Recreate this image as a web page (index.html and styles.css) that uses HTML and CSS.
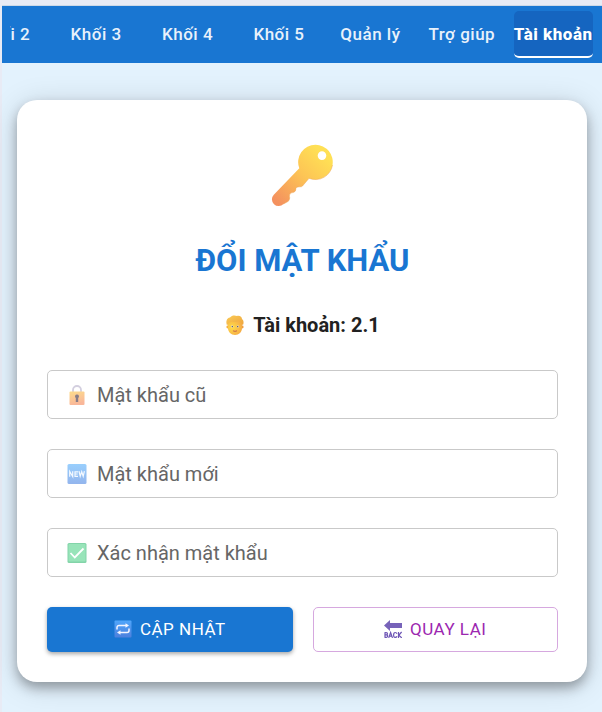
FILE: index.html
```html
<!DOCTYPE html>
<html lang="vi">
<head>
<meta charset="utf-8">
<meta name="viewport" content="width=device-width, initial-scale=1">
<title>Đổi mật khẩu</title>
<link rel="stylesheet" href="styles.css">
</head>
<body>
<div class="app">
  <nav class="navbar">
    <div class="nav-scroller">
      <div class="nav-list">
        <a class="nav-item" href="#">Khối 2</a>
        <a class="nav-item" href="#">Khối 3</a>
        <a class="nav-item" href="#">Khối 4</a>
        <a class="nav-item" href="#">Khối 5</a>
        <a class="nav-item" href="#">Quản lý</a>
        <a class="nav-item" href="#">Trợ giúp</a>
        <a class="nav-item active" href="#" aria-current="page">Tài khoản</a>
      </div>
    </div>
  </nav>
  <main class="page">
    <form class="card">
      <svg class="key" viewBox="0 0 64 64" aria-hidden="true">
        <defs>
          <linearGradient id="keyFill" x1="0.85" y1="0.15" x2="0.1" y2="0.95">
            <stop offset="0" stop-color="#ffe055"/>
            <stop offset="0.45" stop-color="#fdc455"/>
            <stop offset="1" stop-color="#f4915f"/>
          </linearGradient>
        </defs>
        <path fill="url(#keyFill)" fill-rule="evenodd" d="M44.500 1.700a17.400 17.400 0 1 1-6.500 33.600L31.500 43q-.8 1-2.500.8-3.500-.3-4 1.500-.2 3.500-2.200 4-3.800.2-4.300 2.700-.2 1.500.2 2.700.2 1.500-1.400 3.600L12.500 61A6.700 6.700 0 0 1 2.800 51.700L28.300 25.300A17.400 17.400 0 0 1 44.500 1.700zm6.500 6.600a4.300 4.300 0 1 0 0 8.600a4.300 4.300 0 0 0 0-8.600z"/>
        <path fill="none" stroke="#eda24d" stroke-width=".8" opacity=".6" d="M61.500 22A17.200 17.200 0 0 1 38 35.300L31.500 43q-.8 1-2.500.8-3.500-.3-4 1.500-.2 3.500-2.200 4-3.800.2-4.300 2.700-.2 1.500.2 2.700.2 1.500-1.400 3.600L12.500 61"/>
      </svg>
      <h1 class="title">ĐỔI MẬT KHẨU</h1>
      <p class="account">
        <svg class="icon" viewBox="0 0 20 20" aria-hidden="true">
          <defs>
            <radialGradient id="faceFill" cx=".3" cy=".45" r=".75">
              <stop offset="0" stop-color="#ffdc49"/>
              <stop offset="1" stop-color="#f5a945"/>
            </radialGradient>
            <linearGradient id="hairFill" x1="0" y1="0" x2="1" y2="1">
              <stop offset="0" stop-color="#fbcb55"/>
              <stop offset="1" stop-color="#eda43d"/>
            </linearGradient>
          </defs>
          <circle cx="2.800" cy="12" r="1.400" fill="#f5b03f"/>
          <circle cx="17.200" cy="12" r="1.400" fill="#ee9c42"/>
          <path fill="url(#faceFill)" d="M3 6h14v7c0 4-3 7-7 7s-7-3-7-7z"/>
          <path fill="url(#hairFill)" d="M2.200 10.500C.5 7 1.500 3 5 2.500 6.500.2 10 0 12 1c3-.6 5 1 5 3 2 1.500 2 4.500.8 6.500L16.500 8C15.500 7 15 6.500 14 6 10 7.500 7 6.500 5 7c-1.500.7-2 2-2.800 3.500z"/>
          <circle cx="7.200" cy="11.500" r="1.100" fill="#fff"/><circle cx="12.800" cy="11.500" r="1.100" fill="#fff"/>
          <circle cx="7.300" cy="11.600" r=".8" fill="#655d6e"/><circle cx="12.700" cy="11.600" r=".8" fill="#655d6e"/>
          <path fill="none" stroke="#c25a4a" stroke-width=".9" stroke-linecap="round" d="M8.300 16q1.700.9 3.400 0"/>
        </svg>
        <span>Tài khoản: 2.1</span>
      </p>

      <div class="field">
        <input id="old" type="password" autocomplete="off">
        <label for="old">
          <svg class="icon" viewBox="0 0 20 20" aria-hidden="true">
            <defs><linearGradient id="lockFill" x1="0" y1="0" x2=".3" y2="1"><stop offset="0" stop-color="#fddc8b"/><stop offset="1" stop-color="#f9b79a"/></linearGradient></defs>
            <path fill="none" stroke="#d3cfdf" stroke-width="1.800" d="M6 8V5a4 4 0 0 1 8 0V8"/>
            <rect x="2.500" y="6.500" width="15" height="13.500" rx="1" fill="url(#lockFill)"/>
            <path fill="#887d87" d="M10 9.500a2 2 0 0 1 1.200 3.600V17H8.800v-3.900A2 2 0 0 1 10 9.500z"/>
          </svg>
          <span>Mật khẩu cũ</span>
        </label>
      </div>

      <div class="field">
        <input id="new" type="password" autocomplete="off">
        <label for="new">
          <svg class="icon" viewBox="0 0 20 20" aria-hidden="true">
            <defs><linearGradient id="newFill" x1="0" y1="0" x2="0" y2="1"><stop offset="0" stop-color="#99cffd"/><stop offset="1" stop-color="#93b5ed"/></linearGradient></defs>
            <rect x=".5" width="19" height="20" rx="1.500" fill="url(#newFill)"/>
            <path fill="none" stroke="#f4f9ff" stroke-width="1.200" d="M2.700 12.800V7.500l3 5V7.200M11 7.800H8v4.500h3M8 10h2.700M12 7.200l1.200 5 1.500-4.500 1.500 4.500 1.200-5"/>
          </svg>
          <span>Mật khẩu mới</span>
        </label>
      </div>

      <div class="field">
        <input id="confirm" type="password" autocomplete="off">
        <label for="confirm">
          <svg class="icon" viewBox="0 0 20 20" aria-hidden="true">
            <rect x=".5" width="19" height="20" rx="1.500" fill="#83d4a9"/>
            <rect x="1.500" y="1" width="17" height="17.500" rx="1" fill="#98e4b9"/>
            <path fill="none" stroke="#fff" stroke-width="1.800" d="M3.500 10l4.300 4.500L16.500 5.500"/>
          </svg>
          <span>Xác nhận mật khẩu</span>
        </label>
      </div>

      <div class="actions">
        <button class="btn primary" type="submit">
          <svg class="icon-small" viewBox="0 0 18 18" aria-hidden="true">
            <defs><linearGradient id="loopFill" x1="0" y1="0" x2="0" y2="1"><stop offset="0" stop-color="#50a6fb"/><stop offset="1" stop-color="#4d80dd"/></linearGradient></defs>
            <rect x=".5" y=".5" width="17" height="17" rx="1" fill="url(#loopFill)"/>
            <path fill="none" stroke="#f4f5ff" stroke-width="1.500" d="M3 9.500V7.500a2 2 0 0 1 2-2h7M15 8.500v2a2 2 0 0 1-2 2H6"/>
            <path fill="#f4f5ff" d="M11.500 3.300l3.500 2.200-3.500 2.200zM6.500 10.300L3 12.500l3.500 2.200z"/>
          </svg>
          <span>CẬP NHẬT</span>
        </button>
        <button class="btn secondary" type="button">
          <svg class="icon-small" viewBox="0 0 18 18" aria-hidden="true">
            <path fill="#7763b9" d="M0 5.500L6 0v3h12v5H6v3z"/>
            <path fill="none" stroke="#6d55b5" stroke-width="1.200" d="M1 12.600v4.800M.6 12.600h1.600q1.300 0 1.300 1.100T2.200 14.900H1h1.400q1.300 0 1.300 1.200t-1.300 1.200H.6M4.700 17.900L6.600 12.500l1.900 5.400M5.300 16.200h2.600M13 13.700q-.5-1.200-1.700-1.200-1.700 0-1.700 2.500t1.700 2.400q1.200 0 1.700-1.200M14.500 12v5.900M17.600 12l-2.800 3.300 3 2.600"/>
          </svg>
          <span>QUAY LẠI</span>
        </button>
      </div>
    </form>
  </main>
</div>
</body>
</html>
```
FILE: styles.css
```css
* {
  box-sizing: border-box;
}

body {
  margin: 0;
  padding: 6px 0 0 2px;
  background: #e8ebf5;
  color: #212121;
  font-family: Roboto, "Noto Sans", sans-serif;
}

.app {
  display: flex;
  flex-direction: column;
  min-height: calc(100vh - 6px);
  background: #e3f2fd;
}

.navbar {
  height: 57px;
  padding: 5px 9px 0 8px;
  background: #1976d2;
  box-shadow: 0 -1px 0 #cdd9e7;
}

.nav-scroller {
  overflow: hidden;
}

.nav-list {
  display: flex;
  gap: 12px;
  margin-left: -45px;
}

.nav-item {
  flex: 1 1 0;
  min-width: 0;
  display: flex;
  align-items: center;
  justify-content: center;
  height: 47px;
  border-bottom: 2px solid transparent;
  border-radius: 5px;
  color: #e8f1fb;
  font-size: 17px;
  font-weight: 500;
  letter-spacing: 0.03em;
  text-decoration: none;
  white-space: nowrap;
}

.nav-item.active {
  border-bottom-color: #fff;
  background: #1565c0;
  color: #fff;
  font-weight: 800;
}

.page {
  flex: 1;
  padding: 37px 15px 30px;
}

.card {
  display: flex;
  flex-direction: column;
  gap: 30px;
  padding: 42px 29px 30px 30px;
  border-radius: 20px;
  background: #fff;
  box-shadow: 0 6px 12px rgba(0, 0, 0, 0.3), 0 4px 30px rgba(0, 0, 0, 0.15);
}

.key {
  align-self: center;
  width: 64px;
  height: 66px;
}

.title {
  margin: 0;
  color: #1976d2;
  font-size: 31px;
  font-weight: 700;
  line-height: 46px;
  text-align: center;
}

.account {
  display: flex;
  align-items: center;
  justify-content: center;
  gap: 8px;
  margin: 0 0 4px;
  font-size: 20px;
  font-weight: 700;
  line-height: 22px;
}

.icon {
  flex: none;
  width: 20px;
  height: 20px;
}

.icon-small {
  flex: none;
  width: 18px;
  height: 18px;
}

.field {
  display: grid;
  height: 49px;
}

.field input,
.field label {
  grid-area: 1 / 1;
  min-width: 0;
}

.field input {
  width: 100%;
  padding: 0 20px;
  border: 1px solid #c9c9c9;
  border-radius: 5px;
  background: #fff;
  font: inherit;
  font-size: 20px;
}

.field label {
  display: flex;
  align-items: center;
  gap: 10px;
  padding-left: 20px;
  color: #666;
  font-size: 20px;
  pointer-events: none;
}

.field input:focus + label {
  visibility: hidden;
}

.actions {
  display: grid;
  grid-template-columns: 1fr 1fr;
  gap: 20px;
}

.btn {
  display: flex;
  align-items: center;
  justify-content: center;
  gap: 8px;
  height: 45px;
  padding: 0 0 1px;
  border: 0;
  border-radius: 5px;
  font-family: inherit;
  font-size: 17px;
  font-weight: 400;
  letter-spacing: 0.03em;
}

.primary {
  background: #1976d2;
  color: #fff;
  box-shadow: 0 2px 4px rgba(0, 0, 0, 0.35);
}

.btn.secondary {
  border: 1px solid #d6a8df;
  background: #fff;
  color: #9c27b0;
}
```
